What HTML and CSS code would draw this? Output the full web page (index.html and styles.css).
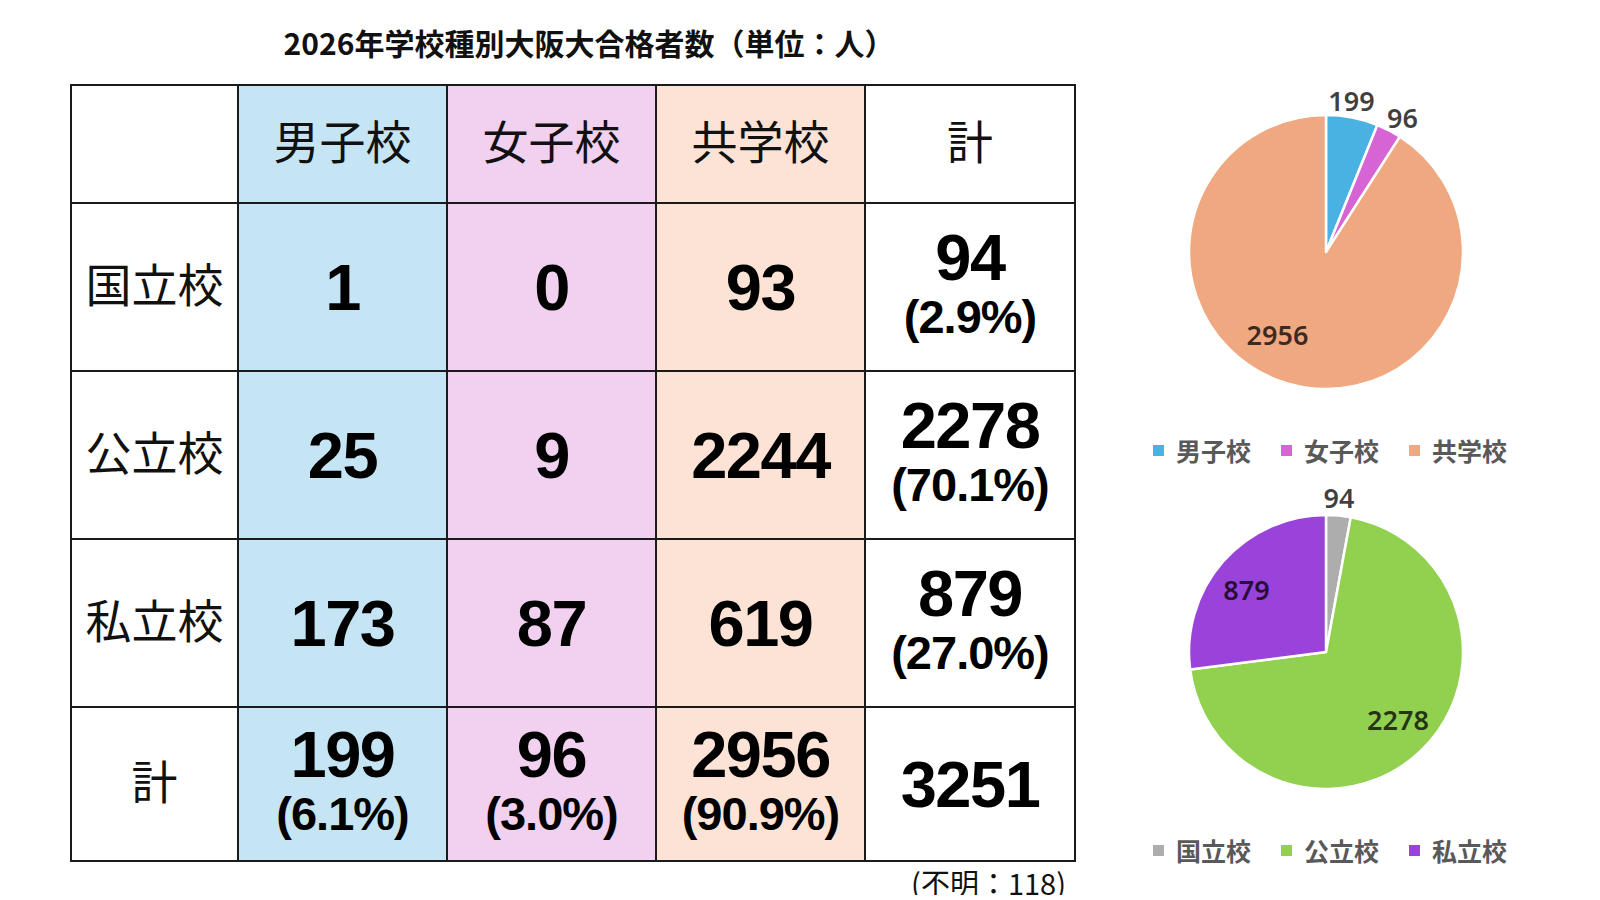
FILE: index.html
```html
<!DOCTYPE html>
<html lang="ja">
<head>
<meta charset="utf-8">
<title>2026年学校種別大阪大合格者数</title>
<link rel="stylesheet" href="styles.css">
</head>
<body>
<div class="page">
  <section class="left">
    <h1 class="title">2026年学校種別大阪大合格者数（単位：人）</h1>
    <table class="grid">
      <colgroup>
        <col class="c-label"><col class="c-data"><col class="c-data"><col class="c-data"><col class="c-total">
      </colgroup>
      <tr class="r-head">
        <th class="lab"></th>
        <th class="boys">男子校</th>
        <th class="girls">女子校</th>
        <th class="coed">共学校</th>
        <th class="sum">計</th>
      </tr>
      <tr class="r-data">
        <th class="lab">国立校</th>
        <td class="boys"><span class="num">1</span></td>
        <td class="girls"><span class="num">0</span></td>
        <td class="coed"><span class="num">93</span></td>
        <td class="sum"><span class="num">94</span><span class="pct">(2.9%)</span></td>
      </tr>
      <tr class="r-data">
        <th class="lab">公立校</th>
        <td class="boys"><span class="num">25</span></td>
        <td class="girls"><span class="num">9</span></td>
        <td class="coed"><span class="num">2244</span></td>
        <td class="sum"><span class="num">2278</span><span class="pct">(70.1%)</span></td>
      </tr>
      <tr class="r-data">
        <th class="lab">私立校</th>
        <td class="boys"><span class="num">173</span></td>
        <td class="girls"><span class="num">87</span></td>
        <td class="coed"><span class="num">619</span></td>
        <td class="sum"><span class="num">879</span><span class="pct">(27.0%)</span></td>
      </tr>
      <tr class="r-total">
        <th class="lab">計</th>
        <td class="boys"><span class="num">199</span><span class="pct">(6.1%)</span></td>
        <td class="girls"><span class="num">96</span><span class="pct">(3.0%)</span></td>
        <td class="coed"><span class="num">2956</span><span class="pct">(90.9%)</span></td>
        <td class="sum"><span class="num">3251</span></td>
      </tr>
    </table>
    <p class="note">(不明：118)</p>
  </section>

  <section class="right">
    <div class="chart">
      <svg class="pie" width="400" height="320" viewBox="0 0 400 320">
        <path class="s-boys" d="M200,172 L200,35 A137,137 0 0 1 251.4,45.0 Z"/>
        <path class="s-girls" d="M200,172 L251.4,45.0 A137,137 0 0 1 273.95,56.67 Z"/>
        <path class="s-coed" d="M200,172 L273.95,56.67 A137,137 0 1 1 200,35 Z"/>
        <text class="lbl" x="225.5" y="31" text-anchor="middle">199</text>
        <text class="lbl" x="276.5" y="48" text-anchor="middle">96</text>
        <text class="lbl" x="151.5" y="265" text-anchor="middle">2956</text>
      </svg>
      <ul class="legend">
        <li><i class="sw sw-boys"></i>男子校</li>
        <li><i class="sw sw-girls"></i>女子校</li>
        <li><i class="sw sw-coed"></i>共学校</li>
      </ul>
    </div>
    <div class="chart chart2">
      <svg class="pie" width="400" height="320" viewBox="0 0 400 320">
        <path class="s-nat" d="M200,172 L200,35 A137,137 0 0 1 224.75,37.25 Z"/>
        <path class="s-pub" d="M200,172 L224.75,37.25 A137,137 0 1 1 64.12,189.5 Z"/>
        <path class="s-pri" d="M200,172 L64.12,189.5 A137,137 0 0 1 200,35 Z"/>
        <text class="lbl" x="213" y="28" text-anchor="middle">94</text>
        <text class="lbl" x="120.5" y="120" text-anchor="middle">879</text>
        <text class="lbl" x="272" y="250" text-anchor="middle">2278</text>
      </svg>
      <ul class="legend">
        <li><i class="sw sw-nat"></i>国立校</li>
        <li><i class="sw sw-pub"></i>公立校</li>
        <li><i class="sw sw-pri"></i>私立校</li>
      </ul>
    </div>
  </section>
</div>
</body>
</html>
```

FILE: styles.css
```css
html, body {
  margin: 0;
  padding: 0;
  background: #ffffff;
}

body {
  font-family: "Noto Sans CJK JP", "Noto Sans", sans-serif;
  color: #000;
}

.page {
  display: flex;
  align-items: flex-start;
  gap: 50px;
  padding: 24px 0 0 70px;
}

.left {
  width: 1006px;
  display: flex;
  flex-direction: column;
}

.title {
  margin: 0 0 24px 0;
  padding-left: 32px;
  font-family: "Noto Sans CJK JP", sans-serif;
  font-weight: 700;
  font-size: 30px;
  line-height: 36px;
  text-align: center;
  color: #111;
}

.grid {
  width: 1006px;
  table-layout: fixed;
  border-collapse: collapse;
  border: 2px solid #1a1a1a;
}

.c-label { width: 167px; }
.c-data { width: 209px; }
.c-total { width: 210px; }

.grid th,
.grid td {
  border: 2px solid #1a1a1a;
  padding: 0;
  text-align: center;
  vertical-align: middle;
}

.r-head { height: 118px; }
.r-data { height: 168px; }
.r-total { height: 154px; }

.grid th {
  padding-bottom: 10px;
  font-family: "Noto Sans CJK JP", sans-serif;
  font-weight: 400;
  font-size: 46px;
  line-height: 60px;
  color: #111;
}

.boys { background: #c5e4f4; }
.girls { background: #f2d0ef; }
.coed { background: #fce3d5; }
.sum, .lab { background: #ffffff; }

.num,
.pct {
  display: block;
  font-family: "Liberation Sans", Arial, sans-serif;
  font-weight: 700;
  line-height: 59px;
  color: #000;
}

.num {
  font-size: 65px;
  letter-spacing: -1.5px;
}

.pct {
  font-size: 47px;
  letter-spacing: -1px;
}

.note {
  margin: 7px 0 0 0;
  padding-right: 10px;
  text-align: right;
  font-family: "Noto Sans CJK JP", sans-serif;
  font-weight: 400;
  font-size: 29px;
  line-height: 26px;
  color: #111;
}

.right {
  display: flex;
  flex-direction: column;
  width: 400px;
  padding-top: 56px;
}

.chart {
  display: flex;
  flex-direction: column;
  align-items: center;
}

.chart2 {
  margin-top: 15px;
}

.pie {
  display: block;
}

.pie path {
  stroke: #ffffff;
  stroke-width: 2.5;
  stroke-linejoin: round;
}

.s-boys { fill: #4ab2e2; }
.s-girls { fill: #d764d5; }
.s-coed { fill: #efa880; }
.s-nat { fill: #adadad; }
.s-pub { fill: #92d050; }
.s-pri { fill: #9a43da; }

.lbl {
  font-family: "Noto Sans", sans-serif;
  font-weight: 600;
  font-size: 27px;
  fill: #000;
  fill-opacity: 0.75;
}

.legend {
  list-style: none;
  margin: 35px 0 0 8px;
  padding: 0;
  display: flex;
  gap: 30px;
  font-family: "Noto Sans CJK JP", sans-serif;
  font-weight: 700;
  font-size: 25px;
  line-height: 30px;
  color: #595959;
}

.legend li {
  display: flex;
  align-items: center;
  gap: 12px;
}

.sw {
  display: block;
  width: 11px;
  height: 11px;
}

.sw-boys { background: #4ab2e2; }
.sw-girls { background: #d764d5; }
.sw-coed { background: #efa880; }
.sw-nat { background: #adadad; }
.sw-pub { background: #92d050; }
.sw-pri { background: #9a43da; }
```
